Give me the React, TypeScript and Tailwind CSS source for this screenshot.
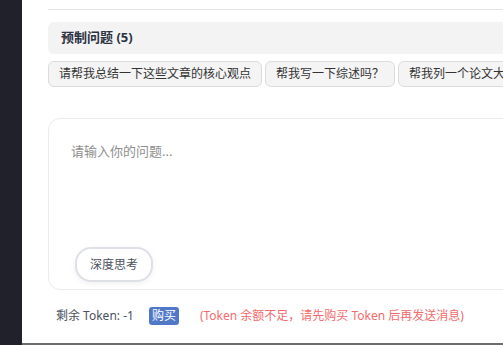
import { useState } from "react";

const presetQuestions = [
  "请帮我总结一下这些文章的核心观点",
  "帮我写一下综述吗？",
  "帮我列一个论文大纲",
  "这些文献有哪些研究方法？",
  "帮我翻译一下摘要",
];

export default function App() {
  const [question, setQuestion] = useState("");
  const [deepThink, setDeepThink] = useState(false);

  return (
    <div className="flex h-[345px] w-[503px] overflow-hidden bg-white font-['Noto_Sans','Noto_Sans_CJK_SC',sans-serif]">
      {/* Sidebar */}
      <aside className="w-[22px] shrink-0 bg-[#20212b]" />

      <main className="min-w-0 flex-1 overflow-hidden border-b-2 border-[#6c6c6c] pl-[26px]">
        <div className="w-[720px]">
          <div className="h-[10px] border-b border-[#e2e2e2]" />

          {/* Preset questions */}
          <div className="mt-[12px] flex h-[32px] items-center rounded-md bg-[#f3f3f3] pl-[13px] text-[13px] font-bold text-[#2c3443]">
            预制问题 ({presetQuestions.length})
          </div>
          <div className="mt-[7px] flex gap-[3px] whitespace-nowrap">
            {presetQuestions.map((q) => (
              <button
                key={q}
                className="h-[26px] shrink-0 rounded-md border border-[#dcdcdc] bg-[#f4f4f4] px-[10px] text-[12px] leading-[24px] text-[#333]"
                onClick={() => setQuestion(q)}
              >
                {q}
              </button>
            ))}
          </div>

          {/* Input card */}
          <div className="mt-[31px] flex h-[172px] flex-col rounded-[12px] border border-[#ebebeb] px-[22px] pb-[7px] pt-[22px]">
            <textarea
              value={question}
              onChange={(e) => setQuestion(e.target.value)}
              placeholder="请输入你的问题..."
              className="flex-1 resize-none bg-transparent text-[13px] leading-[20px] text-[#333] outline-none placeholder:text-[#8f8f8f]"
            />
            <div>
              <button
                onClick={() => setDeepThink(!deepThink)}
                className={`ml-[4px] h-[35px] w-[78px] rounded-[16px] border-2 text-[12px] text-[#4b5260] shadow-[0_2px_6px_rgba(0,0,0,0.06)] ${
                  deepThink ? "border-[#5077c8] bg-[#eef3fc]" : "border-[#dde1e7] bg-white"
                }`}
              >
                深度思考
              </button>
            </div>
          </div>

          {/* Token status */}
          <div className="mt-[17px] flex items-center pl-[8px] text-[12px] leading-[18px]">
            <span className="text-[#4a5160]">剩余 Token: -1</span>
            <span className="ml-[15px] rounded-[3px] bg-[#5077c8] px-[3px] text-white">购买</span>
            <span className="ml-[21px] text-[#f26b6b]">(Token 余额不足，请先购买 Token 后再发送消息)</span>
          </div>
        </div>
      </main>
    </div>
  );
}
